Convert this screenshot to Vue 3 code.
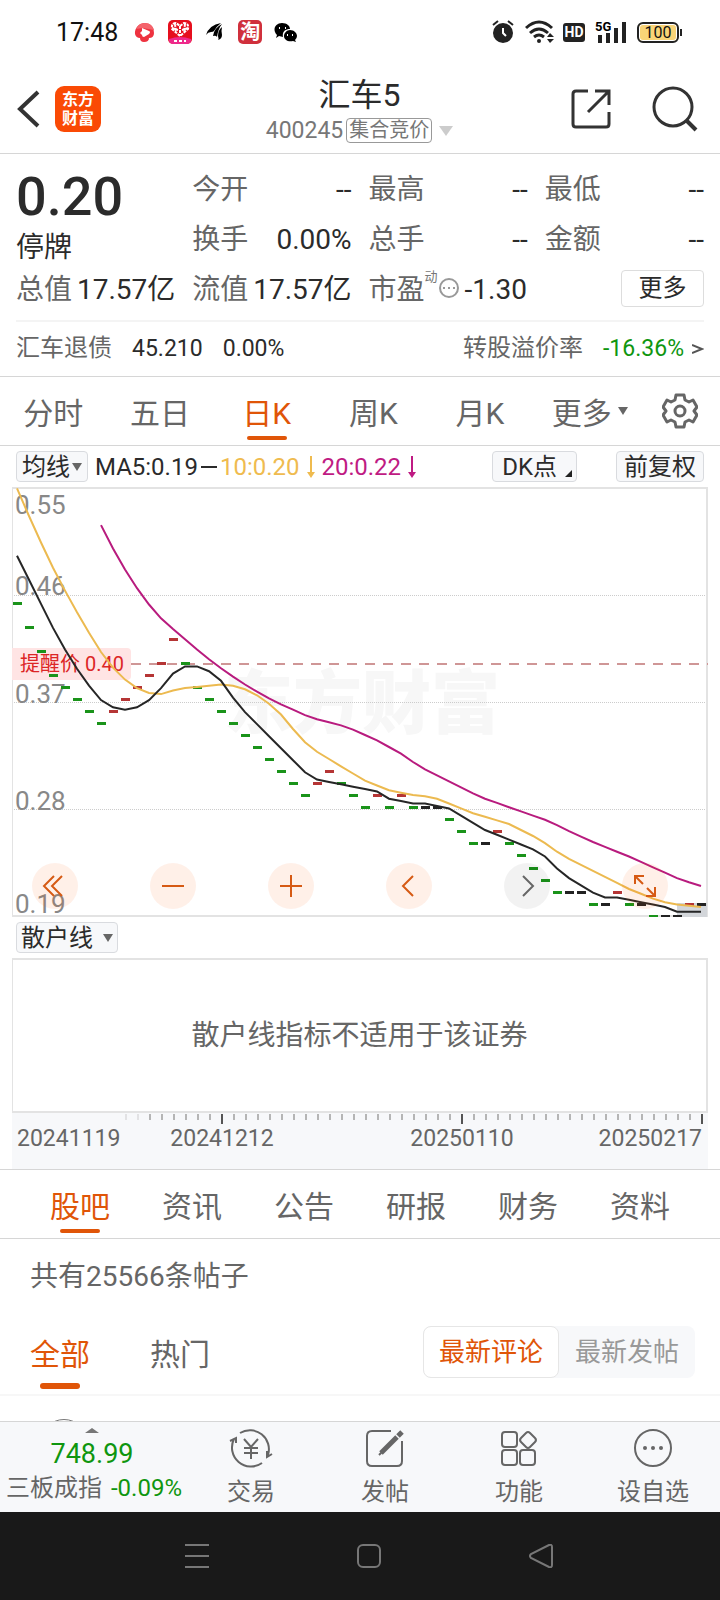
<script setup>
import { ref, computed } from "vue";

const quoteCells = [
  { label: "今开", value: "--" },
  { label: "最高", value: "--" },
  { label: "最低", value: "--" },
  { label: "换手", value: "0.00%" },
  { label: "总手", value: "--" },
  { label: "金额", value: "--" },
];
const periods = ["分时", "五日", "日K", "周K", "月K"];
const sections = ["股吧", "资讯", "公告", "研报", "财务", "资料"];
const period = ref("日K");
const section = ref("股吧");
const feed = ref("全部");
const order = ref("最新评论");

// closes before the visible window, needed for the moving averages
const history = [
  0.75, 0.72, 0.69, 0.66, 0.63, 0.6, 0.57, 0.55, 0.53, 0.51, 0.49, 0.47,
];
const closes = [
  0.45, 0.43, 0.41, 0.39, 0.38, 0.37, 0.36, 0.35, 0.36, 0.37, 0.38, 0.39, 0.4,
  0.42, 0.4, 0.38, 0.37, 0.36, 0.35, 0.34, 0.33, 0.32, 0.31, 0.3, 0.29, 0.3,
  0.31, 0.3, 0.29, 0.28, 0.29, 0.28, 0.29, 0.28, 0.28, 0.28, 0.27, 0.26, 0.25,
  0.25, 0.26, 0.25, 0.24, 0.23, 0.22, 0.21, 0.21, 0.21, 0.2, 0.2, 0.21, 0.2,
  0.2, 0.19, 0.19, 0.19, 0.2, 0.2,
];
const all = [...history, ...closes];
const xAt = (i) => 5 + i * 12;
const yAt = (price) => 177 + (0.4 - price) * 1203;

const bars = closes.map((close, i) => {
  const prev = all[history.length + i - 1];
  const kind = close > prev ? "up" : close < prev ? "down" : "flat";
  return { x: xAt(i) - 4, y: Math.round(yAt(close)) - 2, kind };
});

function average(days) {
  const points = [];
  closes.forEach((_, i) => {
    const end = history.length + i + 1;
    if (end < days) return;
    const sum = all.slice(end - days, end).reduce((a, b) => a + b, 0);
    points.push(`${xAt(i)},${yAt(sum / days).toFixed(1)}`);
  });
  return points.join(" ");
}

const lines = computed(() => [
  { name: "ma20", points: average(20) },
  { name: "ma10", points: average(10) },
  { name: "ma5", points: average(5) },
]);

const prices = [
  { text: "0.55", y: 27 },
  { text: "0.46", y: 108 },
  { text: "0.37", y: 216 },
  { text: "0.28", y: 323 },
  { text: "0.19", y: 426 },
];
const gridLines = [108, 215, 322];

const ticks = Array.from({ length: 49 }, (_, n) => {
  const i = n + 9;
  return { x: 6 + i * 12, major: [17, 37, 57].includes(i), faint: n < 2 };
});
const dates = [
  { text: "20241119", x: 5, anchor: "start" },
  { text: "20241212", x: 210, anchor: "middle" },
  { text: "20250110", x: 450, anchor: "middle" },
  { text: "20250217", x: 690, anchor: "end" },
];

const chartButtons = [
  { label: "最早", path: "M22 13L12 23l10 10M30 13L20 23l10 10" },
  { label: "缩小", path: "M12 23h22" },
  { label: "放大", path: "M12 23h22M23 12v22" },
  { label: "向左", path: "M27 13L17 23l10 10" },
  { label: "向右", path: "M19 13l10 10-10 10", disabled: true },
  { label: "全屏", path: "M13 21v-8h9M13 13l8 8M33 24v9h-9M33 33l-8-8" },
];
</script>

<template>
  <div class="page">
    <div class="status">
      <span class="time">17:48</span>
      <svg class="app-icon" viewBox="0 0 24 24">
        <path
          d="M12 3a9 9 0 0 1 9 10q0 5-5 5 0 4-5 4-4 0-4-4-4 0-5-4A10 10 0 0 1 12 3z"
          fill="#ee3340"
        />
        <path d="M3 9Q6 3 12 3q7 0 9 7L10 8z" fill="#f4646c" />
        <path d="M9 8l7 3q2 1 0 3l-5 3q-2 0-2-2l-2-2 2-2z" fill="#fff" />
      </svg>
      <svg class="app-icon" viewBox="0 0 24 24">
        <rect width="24" height="24" rx="5" fill="#e60f1d" />
        <path d="M1 19q11-4 22 0v2q-1 3-4 3H5q-3 0-4-3z" fill="#ee2a8c" />
        <path
          d="M12 16L4 9q-1-6 4-6l4 3 4-3q5 0 4 6zM12 6v10M7 4l1 8M17 4l-1 8M4 8l6 2M20 8l-6 2"
          fill="none"
          stroke="#fff"
          stroke-width="2"
          stroke-dasharray="3 1"
        />
        <path d="M6 21h3M11 21h3M16 21h2" stroke="#fff" stroke-width="2" />
      </svg>
      <svg class="app-icon" viewBox="0 0 24 24">
        <path d="M3 15Q6 5 18 3q-4 3-7 8-1 1-3 1-3 0-5 3z" />
        <path d="M10 16q1-8 9-12-4 5-5 13-1-2-4-1z" />
        <path d="M15 20q1-1 0-4 0-6 4-9-1 4 0 8 0 4-4 5z" />
      </svg>
      <span class="taobao">淘</span>
      <svg class="app-icon" viewBox="0 0 24 24">
        <path d="M9 3c5 0 8 3 8 6-5 0-8 3-7 8l-4-1-3 2 1-3C-1 10 2 3 9 3z" />
        <path d="M17 10c4 0 7 3 7 6q0 2-2 4l1 2-3-1c-5 1-9-1-9-5 0-3 3-6 6-6z" />
        <path d="M6 8h1M12 8h1M14 15h1M19 15h1" stroke="#fff" stroke-width="2" />
      </svg>
      <span class="spacer"></span>
      <svg class="alarm" viewBox="0 0 22 24">
        <circle cx="11" cy="13" r="10" fill="#222" />
        <path d="M1 5l5-4M21 5l-5-4" stroke="#222" stroke-width="2" />
        <path d="M11 8v5l3 3" fill="none" stroke="#fff" stroke-width="2" />
      </svg>
      <svg class="wifi" viewBox="0 0 30 24">
        <path
          d="M1 8q13-12 26 0M5 13q9-8 18 0M9 17q5-4 10 0"
          fill="none"
          stroke="#222"
          stroke-width="3"
        />
        <circle cx="14" cy="21" r="2" fill="#222" />
        <path d="M22 17l3-4 4 4zM22 19l3 4 4-4z" fill="#222" />
      </svg>
      <span class="hd">HD</span>
      <svg class="signal" viewBox="0 0 32 24">
        <path
          d="M5 15v8M13 13v10M21 8v15M29 2v21"
          stroke="#222"
          stroke-width="4"
        />
        <text x="0" y="11">5G</text>
      </svg>
      <span class="battery">100</span>
    </div>

    <header class="header">
      <button class="plain" aria-label="返回">
        <svg width="24" height="40" viewBox="0 0 24 40">
          <path d="M22 3L4 20l18 17" fill="none" stroke="#333" stroke-width="4" />
        </svg>
      </button>
      <div class="logo">东方<br />财富</div>
      <div class="heading">
        <h1>汇车5</h1>
        <button class="plain code">
          400245<span class="badge">集合竞价</span><i class="caret light"></i>
        </button>
      </div>
      <button class="plain share" aria-label="分享">
        <svg width="40" height="40" viewBox="0 0 40 40">
          <path
            d="M17 2H5Q2 2 2 5v30q0 3 3 3h30q3 0 3-3V23M24 2h14v14M38 2L17 23"
            fill="none"
            stroke="#333"
            stroke-width="3"
          />
        </svg>
      </button>
      <button class="plain" aria-label="搜索">
        <svg width="46" height="46" viewBox="0 0 46 46">
          <circle cx="21" cy="21" r="19" fill="none" stroke="#333" stroke-width="3" />
          <path d="M34 34l10 10" stroke="#333" stroke-width="4" />
        </svg>
      </button>
    </header>

    <section class="quote">
      <div class="quote-grid">
        <div class="price">
          <strong>0.20</strong>
          <span>停牌</span>
        </div>
        <div v-for="cell in quoteCells" :key="cell.label" class="cell">
          <span class="label">{{ cell.label }}</span>
          <span>{{ cell.value }}</span>
        </div>
        <div class="cell">
          <span class="label">总值</span><span>17.57亿</span>
        </div>
        <div class="cell">
          <span class="label">流值</span><span>17.57亿</span>
        </div>
        <div class="cell pe">
          <span class="label">市盈</span><sup>动</sup>
          <svg width="20" height="20" viewBox="0 0 20 20">
            <circle cx="10" cy="10" r="9" fill="none" stroke="#999" stroke-width="2" />
            <path
              d="M4 10h12"
              stroke="#999"
              stroke-width="2"
              stroke-dasharray="2 3"
            />
          </svg>
          <span>-1.30</span>
        </div>
        <button class="more">更多</button>
      </div>
      <a class="bond" href="#">
        <span class="label">汇车退债</span>
        <span>45.210</span>
        <span>0.00%</span>
        <span class="label rate">转股溢价率</span>
        <span class="green">-16.36%</span>
        <svg width="12" height="14" viewBox="0 0 12 14">
          <path d="M0 3l10 4-10 4" fill="none" stroke="#555" stroke-width="2" />
        </svg>
      </a>
    </section>

    <nav class="periods">
      <button
        v-for="name in periods"
        :key="name"
        class="tab"
        :class="{ active: period === name }"
        @click="period = name"
      >
        {{ name }}
      </button>
      <button class="tab more-tab">更多<i class="caret"></i></button>
      <button class="tab" aria-label="设置">
        <svg width="36" height="36" viewBox="0 0 36 36">
          <path
            d="M14 2h8l1 5 4 2 4-2 4 7-3 4 3 4-4 7-4-2-4 2-1 5h-8l-1-5-4-2-4 2-4-7 3-4-3-4 4-7 4 2 4-2z"
            fill="none"
            stroke="#666"
            stroke-width="3"
            stroke-linejoin="round"
          />
          <circle cx="18" cy="18" r="5" fill="none" stroke="#666" stroke-width="3" />
        </svg>
      </button>
    </nav>

    <div class="indicators">
      <button class="chip">均线<i class="caret"></i></button>
      <span class="ma">MA5:0.19</span>
      <i class="dash"></i>
      <span class="ma ten">10:0.20</span>
      <svg class="arrow ten" viewBox="0 0 8 22">
        <path d="M4 0v18" stroke="currentColor" stroke-width="2" />
        <path d="M0 16h8l-4 6z" fill="currentColor" />
      </svg>
      <span class="ma twenty">20:0.22</span>
      <svg class="arrow twenty" viewBox="0 0 8 22">
        <path d="M4 0v18" stroke="currentColor" stroke-width="2" />
        <path d="M0 16h8l-4 6z" fill="currentColor" />
      </svg>
      <button class="chip dk">DK点<i class="corner"></i></button>
      <button class="chip">前复权</button>
    </div>

    <div class="chart">
      <svg viewBox="0 0 696 430">
        <text class="watermark" x="350" y="241" text-anchor="middle">东方财富</text>
        <line
          v-for="y in gridLines"
          :key="y"
          class="grid-line"
          x1="0"
          x2="694"
          :y1="y + 0.5"
          :y2="y + 0.5"
        />
        <path class="frame" d="M0 1H695V429H0" />
        <path class="frame thin" d="M0.5 0V430" />
        <rect x="665" y="416" width="30" height="14" fill="#d3d6da" />
        <path class="alert-line" d="M119 177H696" />
        <path class="alert-bg" d="M0 161h115q4 0 4 4v24q0 4-4 4H0z" />
        <text class="alert-text" x="8" y="184">提醒价 0.40</text>
        <text
          v-for="price in prices"
          :key="price.text"
          class="price-label"
          x="3"
          :y="price.y"
        >
          {{ price.text }}
        </text>
        <rect
          v-for="(bar, i) in bars"
          :key="i"
          :class="bar.kind"
          :x="bar.x"
          :y="bar.y"
          width="9"
          height="3"
        />
        <polyline
          v-for="line in lines"
          :key="line.name"
          class="average"
          :class="line.name"
          :points="line.points"
        />
      </svg>
      <div class="chart-buttons">
        <button
          v-for="item in chartButtons"
          :key="item.label"
          :aria-label="item.label"
          :class="{ off: item.disabled }"
        >
          <svg width="46" height="46" viewBox="0 0 46 46">
            <path :d="item.path" fill="none" stroke="currentColor" stroke-width="2" />
          </svg>
        </button>
      </div>
    </div>

    <div class="sub-bar">
      <button class="chip sub-chip">散户线<i class="caret"></i></button>
    </div>
    <div class="sub-chart">散户线指标不适用于该证券</div>
    <svg class="axis" viewBox="0 0 696 56">
      <line
        v-for="tick in ticks"
        :key="tick.x"
        :class="{ major: tick.major, faint: tick.faint }"
        :x1="tick.x"
        :x2="tick.x"
        y1="1"
        :y2="tick.major ? 11 : 7"
      />
      <text
        v-for="date in dates"
        :key="date.text"
        :x="date.x"
        y="33"
        :text-anchor="date.anchor"
      >
        {{ date.text }}
      </text>
    </svg>

    <nav class="sections">
      <button
        v-for="name in sections"
        :key="name"
        class="tab"
        :class="{ active: section === name }"
        @click="section = name"
      >
        {{ name }}
      </button>
    </nav>

    <p class="count">共有25566条帖子</p>
    <div class="filters">
      <button
        v-for="name in ['全部', '热门']"
        :key="name"
        class="tab"
        :class="{ active: feed === name }"
        @click="feed = name"
      >
        {{ name }}
      </button>
      <div class="segment">
        <button
          v-for="name in ['最新评论', '最新发帖']"
          :key="name"
          :class="{ on: order === name }"
          @click="order = name"
        >
          {{ name }}
        </button>
      </div>
    </div>
    <div class="posts"><div class="avatar"></div></div>

    <footer class="toolbar">
      <button class="index">
        <i class="caret up"></i>
        <span class="green points">748.99</span>
        <span class="index-row">三板成指<span class="green">-0.09%</span></span>
      </button>
      <button class="tool">
        <svg viewBox="0 0 44 40">
          <path
            d="M11 5A19 19 0 0 1 39 27M33 35A19 19 0 0 1 5 11M1 13l6-3v5M43 26l-5 3v-6"
          />
          <path d="M15 11l7 8 7-8M22 19v12M15 20h14M15 25h14" />
        </svg>
        交易
      </button>
      <button class="tool">
        <svg viewBox="0 0 44 40">
          <path d="M28 3H9Q4 3 4 8v25q0 5 5 5h25q5 0 5-5V13" />
          <path d="M18 25L34 9" stroke-width="5" />
          <path d="M16 27l5-5" />
          <path d="M35 8l4-4" stroke-width="5" />
        </svg>
        发帖
      </button>
      <button class="tool">
        <svg viewBox="0 0 44 40">
          <rect x="5" y="4" width="15" height="15" rx="3" />
          <rect x="5" y="22" width="15" height="15" rx="3" />
          <rect x="23" y="22" width="15" height="15" rx="3" />
          <path d="M29 5q2-2 4 0l5 5q2 2 0 4l-5 5q-2 2-4 0l-5-5q-2-2 0-4z" />
        </svg>
        功能
      </button>
      <button class="tool">
        <svg viewBox="0 0 44 40">
          <circle cx="22" cy="20" r="18" />
          <g class="dots">
            <circle cx="14" cy="20" r="2" />
            <circle cx="22" cy="20" r="2" />
            <circle cx="30" cy="20" r="2" />
          </g>
        </svg>
        设自选
      </button>
    </footer>

    <div class="system">
      <button class="plain" aria-label="菜单">
        <svg viewBox="0 0 24 24"><path d="M0 1h24M0 12h24M0 23h24" /></svg>
      </button>
      <button class="plain" aria-label="主页">
        <svg viewBox="0 0 24 24">
          <rect x="1" y="1" width="22" height="22" rx="5" />
        </svg>
      </button>
      <button class="plain" aria-label="后退">
        <svg viewBox="0 0 24 24">
          <path d="M20 1q3-1 3 2v18q0 3-3 2L2 14q-2-2 0-4z" />
        </svg>
      </button>
    </div>
  </div>
</template>

<style>
body {
  margin: 0;
  background: #fff;
}
</style>

<style scoped>
.page {
  display: flex;
  flex-direction: column;
  min-height: 100vh;
  font-family: Roboto, "Noto Sans CJK SC", sans-serif;
  color: #2b2b2b;
}

button {
  margin: 0;
  padding: 0;
  border: 0;
  background: none;
  font: inherit;
  color: inherit;
}

svg {
  display: block;
}

.plain {
  display: flex;
  align-items: center;
}

.green {
  color: #0f960f;
}

.label {
  color: #666;
}

.caret {
  border: 5px solid transparent;
  border-top: 8px solid #666;
  border-bottom: 0;
}

.caret.light {
  margin-left: 7px;
  border-width: 10px 7px 0;
  border-top-color: #ccc;
}

.caret.up {
  border: 7px solid transparent;
  border-top: 0;
  border-bottom: 5px solid #777;
}

.status {
  display: flex;
  align-items: center;
  height: 64px;
  padding: 0 41px 0 56px;
  color: #111;
}

.time {
  margin-right: 15px;
  font-size: 25px;
}

.app-icon,
.taobao {
  width: 24px;
  height: 24px;
  margin-right: 11px;
}

.taobao {
  border-radius: 5px;
  background: #d0303c;
  color: #fff;
  font-size: 20px;
  font-weight: 700;
  line-height: 24px;
  text-align: center;
}

.spacer {
  flex: 1;
}

.alarm {
  width: 22px;
  height: 24px;
}

.wifi {
  width: 30px;
  height: 24px;
  margin-left: 11px;
}

.hd {
  width: 22px;
  margin: 0 10px 0 8px;
  border-radius: 3px;
  background: #222;
  color: #fff;
  font-size: 14px;
  font-weight: 700;
  line-height: 19px;
  text-align: center;
}

.signal {
  width: 32px;
  height: 24px;
  margin-right: 10px;
}

.signal text {
  font-size: 13px;
  font-weight: 700;
  stroke: #fff;
  stroke-width: 2px;
  paint-order: stroke;
}

.battery {
  position: relative;
  width: 38px;
  border: 2px solid #222;
  border-radius: 6px;
  background: #f9d477;
  box-shadow: inset 0 0 0 1px #fff;
  font-size: 16px;
  line-height: 17px;
  text-align: center;
}

.battery::after {
  content: "";
  position: absolute;
  top: 5px;
  right: -5px;
  width: 2px;
  height: 7px;
  background: #222;
}

.header {
  display: flex;
  align-items: center;
  height: 89px;
  padding: 0 22px 0 16px;
  border-bottom: 1px solid #d6d6d6;
}

.logo {
  width: 46px;
  margin-left: 15px;
  padding: 4px 0;
  border-radius: 9px;
  background: #fa4a05;
  color: #fff;
  font-size: 16px;
  font-weight: 700;
  line-height: 19px;
  text-align: center;
}

.heading {
  display: flex;
  flex: 1;
  flex-direction: column;
  align-items: center;
  margin-left: 47px;
  padding-top: 4px;
}

.heading h1 {
  margin: 0;
  font-size: 32px;
  font-weight: 400;
  line-height: 40px;
}

.code {
  height: 32px;
  color: #777;
  font-size: 23px;
}

.badge {
  margin-left: 3px;
  padding: 0 2px;
  border: 1px solid #999;
  border-radius: 4px;
  font-size: 20px;
  line-height: 23px;
}

.share {
  margin-right: 41px;
}

.quote {
  padding: 0 16px;
  border-bottom: 1px solid #d6d6d6;
}

.quote-grid {
  display: grid;
  grid-template-columns: repeat(4, 1fr);
  grid-auto-rows: 50px;
  column-gap: 17px;
  align-items: center;
  padding: 11px 0 5px;
  font-size: 28px;
  line-height: 40px;
  border-bottom: 2px solid #f4f4f4;
}

.price {
  display: flex;
  grid-row: span 2;
  flex-direction: column;
  justify-content: space-between;
  height: 98px;
}

.price strong {
  font-size: 54px;
  font-weight: 500;
  line-height: 62px;
}

.price span {
  line-height: 32px;
}

.cell {
  display: flex;
  justify-content: space-between;
  white-space: nowrap;
}

.pe {
  align-items: center;
  justify-content: flex-start;
}

.pe sup {
  align-self: flex-start;
  color: #777;
  font-size: 13px;
  line-height: 14px;
}

.pe svg {
  margin: 0 6px 4px 1px;
}

.more {
  justify-self: end;
  width: 83px;
  height: 37px;
  margin-bottom: 4px;
  border: 1px solid #ddd;
  border-radius: 4px;
  font-size: 24px;
  line-height: 32px;
}

.bond {
  display: flex;
  align-items: baseline;
  gap: 20px;
  height: 54px;
  color: inherit;
  font-size: 23px;
  line-height: 52px;
  text-decoration: none;
}

.bond .label {
  font-size: 24px;
}

.rate {
  margin-left: auto;
}

.bond svg {
  align-self: center;
  margin-left: -12px;
}

.tab {
  position: relative;
  display: flex;
  align-items: center;
  justify-content: center;
  height: 100%;
  color: #666;
  font-size: 30px;
}

.tab .caret {
  margin-left: 6px;
}

.more-tab {
  padding-left: 6px;
}

.tab.active {
  color: #e05508;
}

.tab.active::after {
  content: "";
  position: absolute;
  bottom: 5px;
  left: calc(50% - 20px);
  width: 40px;
  height: 4px;
  border-radius: 2px;
  background: #e05508;
}

.periods {
  display: grid;
  grid-template-columns: repeat(6, 4fr) 3fr;
  height: 68px;
  border-bottom: 1px solid #d6d6d6;
}

.indicators {
  display: flex;
  align-items: center;
  height: 41px;
  padding: 0 16px;
  font-size: 24px;
}

.chip {
  display: flex;
  align-items: center;
  justify-content: center;
  box-sizing: border-box;
  height: 31px;
  padding: 0 7px;
  border: 1px solid #d9dbdf;
  border-radius: 4px;
  background: #f7f8fa;
  font-size: 24px;
  line-height: 26px;
}

.indicators .chip:first-child {
  padding: 0 5px;
}

.chip .caret {
  margin-left: 2px;
}

.ma {
  margin-left: 7px;
}

.dash {
  width: 16px;
  height: 2px;
  margin: 0 -4px 0 3px;
  background: currentColor;
}

.arrow {
  width: 8px;
  height: 22px;
  margin-left: 7px;
}

.ten {
  color: #efbb4f;
}

.twenty {
  color: #bf1b83;
}

.chip.dk {
  margin: 0 39px 0 auto;
  padding: 0 4px 0 9px;
}

.corner {
  align-self: flex-end;
  margin: 0 0 4px 8px;
  border-bottom: 7px solid #222;
  border-left: 7px solid transparent;
}

.chart {
  position: relative;
  margin: 0 12px;
}

.chart > svg {
  width: 100%;
}

.watermark {
  font-size: 69px;
  font-weight: 900;
  fill: #f7f7f7;
}

.grid-line {
  stroke: #ccc;
  stroke-dasharray: 1 1;
}

.frame {
  fill: none;
  stroke: #e3e3e3;
  stroke-width: 2;
}

.frame.thin {
  stroke-width: 1;
}

.alert-line {
  stroke: #cf9696;
  stroke-width: 2;
  stroke-dasharray: 10 8;
}

.alert-bg {
  fill: #ffe4e4;
}

.alert-text {
  font-size: 20px;
  fill: #dc2626;
}

.price-label {
  font-size: 26px;
  fill: #888;
}

.up {
  fill: #b53535;
}

.down {
  fill: #1a931a;
}

.flat {
  fill: #222;
}

.average {
  fill: none;
  stroke-width: 2;
}

.ma5 {
  stroke: #262626;
}

.ma10 {
  stroke: #ecba50;
}

.ma20 {
  stroke: #b81b7e;
}

.chart-buttons {
  position: absolute;
  right: 40px;
  bottom: 8px;
  left: 20px;
  display: flex;
  justify-content: space-between;
}

.chart-buttons button {
  border-radius: 50%;
  background: rgba(250, 90, 0, 0.09);
  color: #d65a14;
}

.chart-buttons .off {
  background: rgba(0, 0, 0, 0.05);
  color: #666;
}

.sub-bar {
  display: flex;
  align-items: center;
  height: 41px;
  padding: 0 16px;
}

.sub-chip {
  padding: 0 4px;
}

.sub-chip .caret {
  margin-left: 10px;
}

.sub-chart {
  display: flex;
  align-items: center;
  justify-content: center;
  height: 151px;
  margin: 0 12px;
  border: 2px solid #e3e3e3;
  border-left-width: 1px;
  color: #666;
  font-size: 28px;
  line-height: 32px;
}

.axis {
  margin: 0 12px;
  background: #f7f8fa;
}

.axis line {
  stroke: #b5b5b5;
  stroke-width: 2;
}

.axis .major {
  stroke: #555;
}

.axis .faint {
  stroke: #e2e2e4;
}

.axis text {
  font-size: 23px;
  fill: #666;
}

.sections {
  display: grid;
  grid-template-columns: repeat(6, 1fr);
  height: 68px;
  padding: 0 24px;
  border-top: 1px solid #d6d6d6;
  border-bottom: 1px solid #d6d6d6;
}

.count {
  margin: 0;
  padding: 18px 30px 12px;
  color: #666;
  font-size: 28px;
  line-height: 40px;
}

.filters {
  display: flex;
  align-items: center;
  gap: 60px;
  height: 85px;
  padding: 0 25px 0 30px;
  border-bottom: 2px solid #f7f7f7;
}

.filters .tab.active::after {
  height: 6px;
  border-radius: 3px;
}

.segment {
  display: flex;
  margin-left: auto;
  border-radius: 8px;
  background: #f7f8fa;
  color: #999;
  font-size: 26px;
  line-height: 44px;
}

.segment button {
  box-sizing: border-box;
  width: 136px;
  height: 52px;
  border-radius: 8px;
}

.segment .on {
  border: 1px solid #e6e6e6;
  background: #fff;
  color: #e05508;
}

.posts {
  flex: 1 0 25px;
  height: 25px;
  overflow: hidden;
}

.avatar {
  width: 46px;
  height: 46px;
  margin: 23px 0 0 40px;
  border: 1px solid #777;
  border-radius: 50%;
}

.toolbar {
  display: grid;
  grid-template-columns: 184fr repeat(4, 134fr);
  height: 90px;
  border-top: 1px solid #d6d6d6;
  background: #f7f8fa;
  color: #666;
  font-size: 24px;
}

.index {
  display: flex;
  flex-direction: column;
  align-items: center;
  padding-top: 6px;
  white-space: nowrap;
}

.points {
  font-size: 27px;
  line-height: 42px;
}

.index-row {
  padding-left: 4px;
  line-height: 26px;
}

.index-row .green {
  margin-left: 9px;
}

.tool {
  display: flex;
  flex-direction: column;
  align-items: center;
  padding-top: 6px;
  line-height: 48px;
}

.tool svg {
  width: 44px;
  height: 40px;
  fill: none;
  stroke: #666;
  stroke-width: 2;
}

.dots {
  fill: #666;
  stroke: none;
}

.system {
  display: flex;
  align-items: center;
  justify-content: center;
  gap: 148px;
  height: 88px;
  padding-left: 18px;
  background: #191919;
}

.system svg {
  width: 24px;
  height: 24px;
  fill: none;
  stroke: #777;
  stroke-width: 2;
}
</style>
